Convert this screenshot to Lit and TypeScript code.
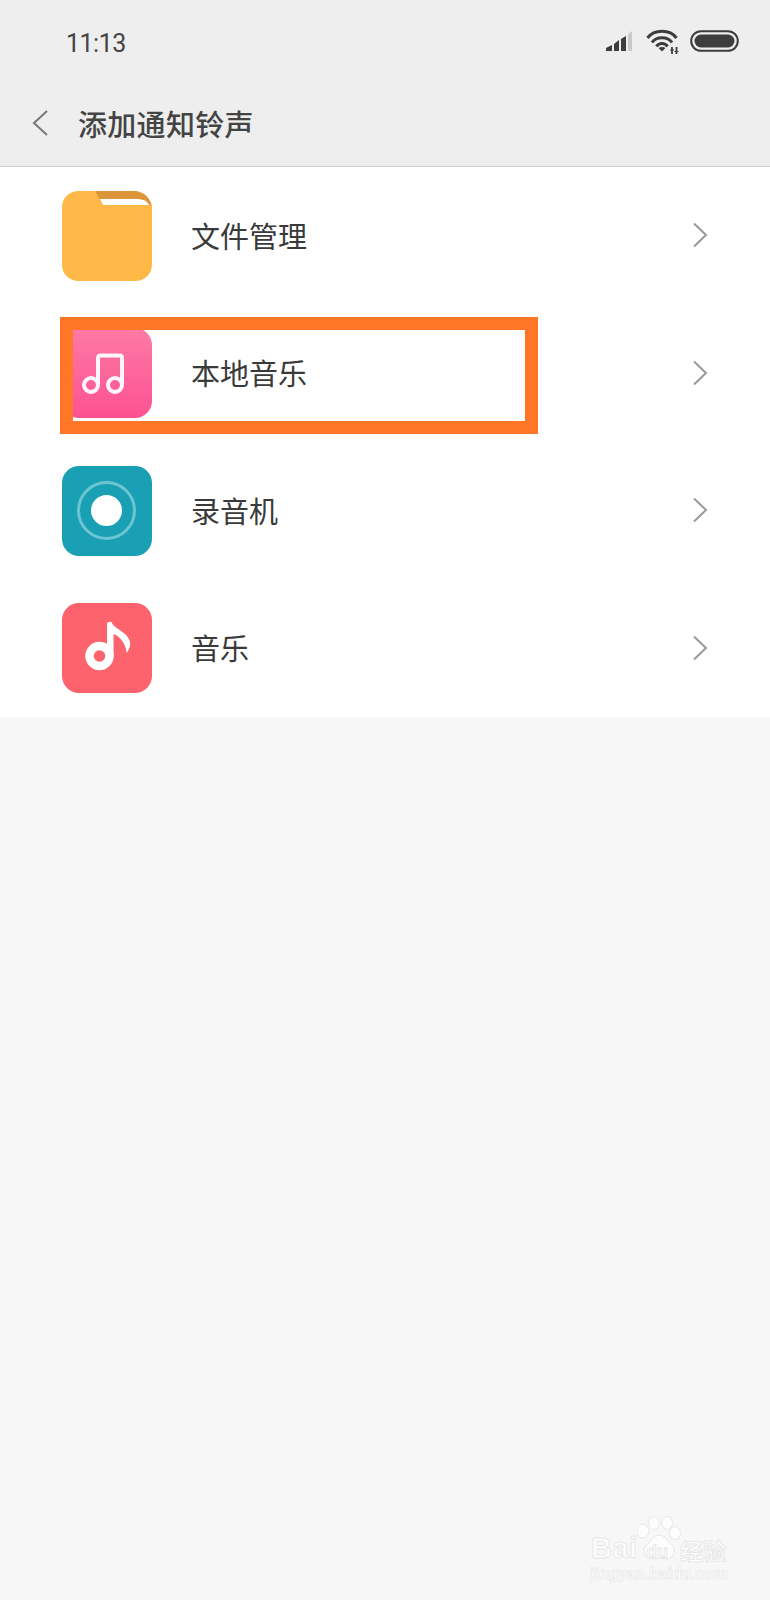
import {LitElement, css, html, svg} from 'lit';
import {customElement} from 'lit/decorators.js';

const folderIcon = svg`
  <path d="M33 0H72C82 0 90 8 90 18V24H40Z" fill="#dc9438"/>
  <path d="M38 8H76C81 8 85 10 87.500 14V18H42Z" fill="#fff"/>
  <path d="M17 0H33L41 14H90V73C90 83 83 90 73 90H17C7 90 0 83 0 73V17C0 7 7 0 17 0Z" fill="#ffb845"/>
`;

const localMusicIcon = svg`
  <defs>
    <linearGradient id="pink" x1="0" y1="0" x2="0" y2="1">
      <stop offset="0" stop-color="#fd7aa6"/>
      <stop offset="1" stop-color="#fd5291"/>
    </linearGradient>
  </defs>
  <rect width="90" height="90" rx="17" fill="url(#pink)"/>
  <g fill="none" stroke="#fff6fa" stroke-width="4">
    <circle cx="29" cy="57" r="7"/>
    <circle cx="53" cy="57" r="7"/>
    <path d="M36 57V30C36 28.500 37 27.500 38.500 27.500H57.500C59 27.500 60 28.500 60 30V57"/>
  </g>
`;

const recorderIcon = svg`
  <rect width="90" height="90" rx="17" fill="#1aa0b4"/>
  <circle cx="44.500" cy="44.500" r="28" fill="none" stroke="#6cc5d1" stroke-width="3"/>
  <circle cx="44.500" cy="44.500" r="15.500" fill="#fff"/>
`;

const musicIcon = svg`
  <rect width="90" height="90" rx="17" fill="#fd636d"/>
  <circle cx="37.500" cy="53" r="10" fill="none" stroke="#fff" stroke-width="8.500"/>
  <path fill="#fff" d="M45 21C45 19 47.500 18.500 49.500 19C51 24 59 27 64 32C69 37 70 43 64.500 50C64.500 42 58 33 51.500 31V53H45Z"/>
`;

const statusIcons = svg`
  <g fill="#3d3d3d">
    <path d="M0 20L6 17V23H0Z"/>
    <path d="M8 16L13 12V23H8Z"/>
    <path d="M15 11L20 8V23H15Z"/>
    <path d="M22 6.500L26 3V23H22Z" fill="#c9c9c9"/>
  </g>
  <g fill="none" stroke="#3d3d3d" stroke-width="3">
    <path d="M41.500 10C48 1 64 1 70.500 10"/>
    <path d="M46 14.500C50 8 62 8 66 14.500"/>
    <path d="M50.500 18.500C53 14.500 59 14.500 61.500 18.500"/>
  </g>
  <path d="M52.500 20C54.500 18.500 57.500 18.500 59.500 20L56 23.500Z" fill="#3d3d3d"/>
  <path d="M66 19V26M70.500 19V26" stroke="#3d3d3d" stroke-width="1.800"/>
  <path d="M64 22H68M68.500 23.500H72.500" stroke="#3d3d3d" stroke-width="1.200"/>
  <rect x="85.200" y="3.200" width="46.600" height="19.600" rx="9.800" fill="none" stroke="#3d3d3d" stroke-width="2"/>
  <rect x="88.500" y="6.500" width="40" height="13" rx="6.500" fill="#3d3d3d"/>
`;

const rows = [
  {label: '文件管理', icon: folderIcon},
  {label: '本地音乐', icon: localMusicIcon, marked: true},
  {label: '录音机', icon: recorderIcon},
  {label: '音乐', icon: musicIcon},
];

@customElement('app-root')
export class AppRoot extends LitElement {
  static styles = css`
    :host {
      display: block;
      width: 770px;
      height: 1600px;
      position: relative;
      overflow: hidden;
      background: #f7f7f7;
      font-family: 'Noto Sans CJK SC', 'Noto Sans', sans-serif;
    }

    .header {
      background: #eeeeee;
      border-bottom: 1px solid #cfcfcf;
      height: 167px;
      box-sizing: border-box;
    }

    .status {
      height: 84px;
      display: flex;
      align-items: center;
      justify-content: space-between;
      padding: 0 31px 0 66px;
      font-family: Roboto, sans-serif;
      font-size: 25px;
      letter-spacing: -0.5px;
      color: #444;
    }

    .status span {
      margin-top: 3px;
    }

    .status svg {
      display: block;
      margin-top: -1px;
    }

    .titlebar {
      height: 77px;
      display: flex;
      align-items: center;
      padding-left: 32px;
      gap: 30px;
      font-size: 29px;
      letter-spacing: 0.3px;
      font-weight: 500;
      color: #444;
    }

    .list {
      background: #fff;
      height: 550px;
      display: grid;
      grid-template-rows: repeat(4, 1fr);
    }

    .row {
      position: relative;
      display: flex;
      align-items: center;
      padding: 0 62px;
      gap: 39px;
      font-size: 29px;
      color: #3a3a3a;
    }

    .row span {
      flex: 1;
      margin-bottom: 2px;
    }

    .icon {
      display: block;
    }

    .mark {
      position: absolute;
      left: 60px;
      top: 12.500px;
      width: 478px;
      height: 117px;
      box-sizing: border-box;
      border: 13px solid #ff7726;
    }

    .chevron {
      margin-bottom: 1px;
    }

    .watermark {
      position: absolute;
      left: 590px;
      top: 1515px;
      width: 145px;
      height: 70px;
      color: #fdfdfd;
      -webkit-text-stroke: 1px #e8e8e8;
    }

    .brand {
      position: absolute;
      left: 1px;
      top: 16px;
      font: bold 29px/34px 'Liberation Sans', sans-serif;
      letter-spacing: 0.5px;
    }

    .paw {
      position: absolute;
      left: 47px;
      top: 1px;
    }

    .du {
      position: absolute;
      left: 56px;
      top: 27px;
      font: bold 18px/20px 'Liberation Sans', sans-serif;
    }

    .jy {
      position: absolute;
      left: 90px;
      top: 20px;
      font-size: 23px;
      line-height: 30px;
      font-weight: 700;
    }

    .site {
      position: absolute;
      left: 0;
      top: 48px;
      font: bold 15.700px/22px 'Liberation Sans', sans-serif;
      -webkit-text-stroke: 0.7px #e8e8e8;
      white-space: nowrap;
    }
  `;

  render() {
    return html`
      <div class="header">
        <div class="status">
          <span>11:13</span>
          <svg width="133" height="27" viewBox="0 0 133 27">${statusIcons}</svg>
        </div>
        <div class="titlebar">
          <svg width="16" height="26" viewBox="0 0 16 26">
            <path d="M15 1L2 13L15 25" fill="none" stroke="#777" stroke-width="2"/>
          </svg>
          <span>添加通知铃声</span>
        </div>
      </div>
      <div class="list">
        ${rows.map(
          (row) => html`
            <div class="row">
              <svg class="icon" width="90" height="90" viewBox="0 0 90 90">${row.icon}</svg>
              <span>${row.label}</span>
              <svg class="chevron" width="16" height="26" viewBox="0 0 16 26">
                <path d="M2 1.500L14 13L2 24.500" fill="none" stroke="#999" stroke-width="2"/>
              </svg>
              ${row.marked ? html`<div class="mark"></div>` : ''}
            </div>
          `
        )}
      </div>
      <div class="watermark">
        <div class="brand">Bai</div>
        <svg class="paw" width="44" height="46" viewBox="0 0 44 46">
          <g fill="#fdfdfd" stroke="#e8e8e8">
            <ellipse cx="6" cy="15" rx="6" ry="7"/>
            <ellipse cx="17" cy="7" rx="5.500" ry="6.500"/>
            <ellipse cx="30" cy="7" rx="5.500" ry="6.500"/>
            <ellipse cx="38" cy="17" rx="5.500" ry="6.500"/>
            <path d="M22 19C28 19 30 25 35 29C40 35 36 44 28 43C24 42 20 42 16 43C8 44 4 36 9 30C14 26 16 19 22 19Z"/>
          </g>
        </svg>
        <div class="du">du</div>
        <div class="jy">经验</div>
        <div class="site">jingyan.baidu.com</div>
      </div>
    `;
  }
}
